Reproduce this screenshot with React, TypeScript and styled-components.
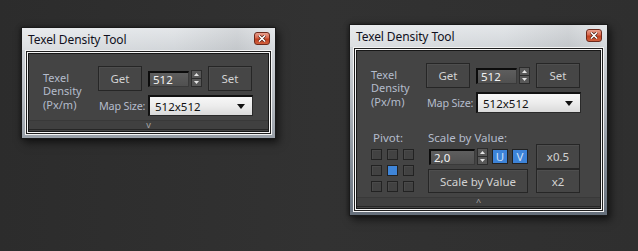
import React from "react";
import styled, { createGlobalStyle } from "styled-components";

const Global = createGlobalStyle`
  html, body { margin: 0; padding: 0; }
  body {
    width: 638px;
    height: 251px;
    overflow: hidden;
    background: #2f2f2f;
    font-family: "Noto Sans", "Open Sans", sans-serif;
  }
`;

const Desktop = styled.div`
  position: relative;
  width: 638px;
  height: 251px;
  background: linear-gradient(90deg, #2c2c2c 0%, #323232 50%, #2f2f2f 100%);
`;

const Win = styled.div<{ $left: number; $top: number; $w: number }>`
  position: absolute;
  left: ${(p) => p.$left}px;
  top: ${(p) => p.$top}px;
  width: ${(p) => p.$w}px;
  box-sizing: border-box;
  border: 1px solid #1a1a1a;
  padding: 0 3px 3px;
  background: linear-gradient(
    180deg,
    #e2e5e8 0px,
    #ced2d6 24px,
    #b6bbc1 70px,
    #7c8590 150px,
    #57616d 216px
  );
  box-shadow: 3px 4px 8px rgba(0, 0, 0, 0.55), -1px 0 4px rgba(0, 0, 0, 0.35);
`;

const TitleBar = styled.div`
  height: 22px;
  display: flex;
  align-items: center;
  justify-content: space-between;
  padding-left: 3px;
  margin: 0 -3px;
  padding-right: 5px;
  background: linear-gradient(
    90deg,
    rgba(255, 255, 255, 0.25) 0%,
    rgba(255, 255, 255, 0.05) 60%,
    rgba(0, 0, 0, 0.06) 85%,
    rgba(255, 255, 255, 0.1) 100%
  );
`;

const Title = styled.span`
  font-size: 12px;
  color: #101020;
  padding-left: 3px;
  letter-spacing: -0.1px;
`;

const CloseBtn = styled.div`
  width: 16px;
  height: 13px;
  box-sizing: border-box;
  border: 1px solid #6e2a1c;
  border-radius: 3px;
  background: linear-gradient(180deg, #e9a08e 0%, #d8664c 45%, #c2401f 55%, #d0613f 100%);
  display: flex;
  align-items: center;
  justify-content: center;
  margin-top: -2px;
`;

const Client = styled.div`
  border: 1px solid #f4f4f4;
  padding: 1px;
  background: #1e1e1e;
`;

const ClientInner = styled.div`
  border: 1px solid #f4f4f4;
`;

const Panel = styled.div`
  border: 1px solid #171717;
  background: #444444;
  padding: 12px 0 1px;
  display: flex;
  flex-direction: column;
`;

const TopSection = styled.div`
  display: flex;
  align-items: center;
  padding-left: 14px;
`;

const DensityLabel = styled.div`
  width: 55px;
  font-size: 11px;
  line-height: 13.5px;
  color: #b4bccc;
`;

const Controls = styled.div`
  display: flex;
  flex-direction: column;
  gap: 4px;
`;

const Row = styled.div`
  display: flex;
  align-items: center;
`;

const Button = styled.div<{ $w?: number; $h?: number; $ml?: number }>`
  width: ${(p) => p.$w ?? 44}px;
  height: ${(p) => p.$h ?? 25}px;
  margin-left: ${(p) => p.$ml ?? 0}px;
  box-sizing: border-box;
  border: 1px solid #262626;
  background: #464646;
  box-shadow: inset 1px 1px 0 #4e4e4e;
  color: #d2d2d2;
  font-size: 11.5px;
  display: flex;
  align-items: center;
  justify-content: center;
`;

const NumInput = styled.div<{ $w: number; $ml?: number }>`
  width: ${(p) => p.$w}px;
  margin-left: ${(p) => p.$ml ?? 0}px;
  height: 16px;
  box-sizing: border-box;
  border-top: 2px solid #0c0c0c;
  border-left: 2px solid #0c0c0c;
  border-right: 1px solid #3a3a3a;
  border-bottom: 1px solid #3a3a3a;
  background: linear-gradient(180deg, #5e5e5e, #505050);
  color: #f2f2f2;
  font-size: 11.5px;
  line-height: 13px;
  padding-left: 3px;
`;

const SpinBox = styled.div`
  width: 11px;
  height: 17px;
  box-sizing: border-box;
  margin-left: 2px;
  display: flex;
  flex-direction: column;
  border: 1px solid #2c2c2c;
  background: #4a4a4a;
`;

const SpinHalf = styled.div<{ $down?: boolean }>`
  flex: 1;
  display: flex;
  align-items: center;
  justify-content: center;
  border-top: ${(p) => (p.$down ? "1px solid #2c2c2c" : "none")};
  background: #585858;
`;

const MapLabel = styled.div`
  width: 50px;
  padding-left: 1px;
  box-sizing: border-box;
  font-size: 10.8px;
  letter-spacing: -0.2px;
  color: #b4bccc;
  white-space: nowrap;
`;

const Dropdown = styled.div`
  width: 105px;
  height: 21px;
  box-sizing: border-box;
  border-top: 2px solid #111;
  border-left: 2px solid #111;
  border-right: 1px solid #2a2a2a;
  border-bottom: 1px solid #2a2a2a;
  background: linear-gradient(180deg, #f7f7f7 0%, #ececec 50%, #dadada 100%);
  color: #111;
  font-size: 11.5px;
  display: flex;
  align-items: center;
  justify-content: space-between;
  padding: 0 7px 0 5px;
`;

const Rollout = styled.div`
  margin-top: 4px;
  height: 10px;
  box-sizing: border-box;
  border-top: 1px solid #393939;
  border-bottom: 1px solid #262626;
  background: #404040;
  color: #a8a8a8;
  font-size: 9px;
  line-height: 8px;
  text-align: center;
  display: flex;
  align-items: center;
  justify-content: center;
`;

const LowerSection = styled.div`
  display: flex;
  padding-left: 14px;
  margin-top: 18px;
`;

const PivotCol = styled.div`
  width: 43px;
  display: flex;
  flex-direction: column;
`;

const SmallLabel = styled.div<{ $indent?: number }>`
  height: 13px;
  line-height: 13px;
  font-size: 11.5px;
  color: #b4bccc;
  padding-left: ${(p) => p.$indent ?? 0}px;
  white-space: nowrap;
`;

const PivotGrid = styled.div`
  margin-top: 5px;
  display: grid;
  grid-template-columns: repeat(3, 11px);
  grid-auto-rows: 11px;
  gap: 5px;
`;

const PivotCell = styled.div<{ $on?: boolean }>`
  box-sizing: border-box;
  border: 1px solid #222;
  background: ${(p) => (p.$on ? "#3f85d8" : "#424242")};
  box-shadow: ${(p) => (p.$on ? "none" : "inset 1px 1px 0 #4a4a4a")};
`;

const ScaleCol = styled.div`
  margin-left: 14px;
  width: 100px;
  display: flex;
  flex-direction: column;
`;

const ScaleRow = styled.div`
  height: 25px;
  display: flex;
  align-items: center;
  padding-left: 1px;
`;

const Toggle = styled.div`
  margin-left: 4px;
  width: 16px;
  height: 15px;
  box-sizing: border-box;
  border: 1px solid #222;
  background: #3d83d8;
  color: #cfe0f6;
  font-size: 11.5px;
  display: flex;
  align-items: center;
  justify-content: center;
`;

const BtnCol = styled.div`
  margin-left: 8px;
  margin-top: 13px;
  display: flex;
  flex-direction: column;
`;

const Arrow = ({ up }: { up?: boolean }) => (
  <svg width="5" height="3" viewBox="0 0 5 3">
    <path d={up ? "M0 3 L2.5 0 L5 3 Z" : "M0 0 L5 0 L2.5 3 Z"} fill="#e6e6e6" />
  </svg>
);

const Spinner = () => (
  <SpinBox>
    <SpinHalf>
      <Arrow up />
    </SpinHalf>
    <SpinHalf $down>
      <Arrow />
    </SpinHalf>
  </SpinBox>
);

const CloseX = () => (
  <svg width="8" height="7" viewBox="0 0 8 7">
    <path d="M1 0.5 L7 6.5 M7 0.5 L1 6.5" stroke="#4a1a10" strokeWidth="3" />
    <path d="M1 0.5 L7 6.5 M7 0.5 L1 6.5" stroke="#ffffff" strokeWidth="1.6" />
  </svg>
);

const ToolWindow = ({
  left,
  top,
  width,
  expanded,
}: {
  left: number;
  top: number;
  width: number;
  expanded?: boolean;
}) => (
  <Win $left={left} $top={top} $w={width}>
    <TitleBar>
      <Title>Texel Density Tool</Title>
      <CloseBtn>
        <CloseX />
      </CloseBtn>
    </TitleBar>
    <Client>
      <ClientInner>
        <Panel>
          <TopSection>
            <DensityLabel>
              Texel
              <br />
              Density
              <br />
              (Px/m)
            </DensityLabel>
            <Controls>
              <Row>
                <Button>Get</Button>
                <NumInput $w={41} $ml={6}>
                  512
                </NumInput>
                <Spinner />
                <Button $ml={6}>Set</Button>
              </Row>
              <Row>
                <MapLabel>Map Size:</MapLabel>
                <Dropdown>
                  <span>512x512</span>
                  <svg width="8" height="5" viewBox="0 0 8 5">
                    <path d="M0 0 L8 0 L4 5 Z" fill="#111" />
                  </svg>
                </Dropdown>
              </Row>
            </Controls>
          </TopSection>
          {expanded && (
            <LowerSection>
              <PivotCol>
                <SmallLabel $indent={2}>Pivot:</SmallLabel>
                <PivotGrid>
                  {Array.from({ length: 9 }).map((_, i) => (
                    <PivotCell key={i} $on={i === 4} />
                  ))}
                </PivotGrid>
              </PivotCol>
              <ScaleCol>
                <SmallLabel>Scale by Value:</SmallLabel>
                <ScaleRow>
                  <NumInput $w={46}>2,0</NumInput>
                  <Spinner />
                  <Toggle>U</Toggle>
                  <Toggle>V</Toggle>
                </ScaleRow>
                <Button $w={100} $h={24}>
                  Scale by Value
                </Button>
              </ScaleCol>
              <BtnCol>
                <Button $h={25}>x0.5</Button>
                <Button $h={24}>x2</Button>
              </BtnCol>
            </LowerSection>
          )}
          <Rollout>{expanded ? "^" : "v"}</Rollout>
        </Panel>
      </ClientInner>
    </Client>
  </Win>
);

export default function App() {
  return (
    <>
      <Global />
      <Desktop>
        <ToolWindow left={21} top={27} width={255} />
        <ToolWindow left={349} top={24} width={259} expanded />
      </Desktop>
    </>
  );
}
